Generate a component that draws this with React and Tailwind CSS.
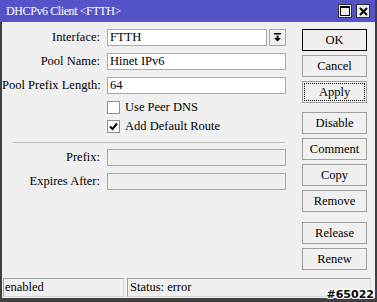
import React from 'react';

function Field({ label, value, disabled, dropdown }) {
  return (
    <div className="flex h-[17px] items-center">
      <div className="w-[98px] text-right leading-none whitespace-nowrap">{label}</div>
      <div className="ml-[7px] flex h-full w-[179px]">
        <div
          className={
            disabled
              ? 'h-full flex-1 border border-[#a8a8a8] bg-[#f0f0f0]'
              : 'flex h-full flex-1 items-center border border-[#a8a8a8] bg-white pl-[2px] leading-none'
          }
        >
          {value}
        </div>
        {dropdown && (
          <div className="ml-[2px] flex h-full w-[17px] items-center justify-center border border-[#a8a8a8] bg-[#f0f0f0]">
            <svg width="9" height="9" viewBox="0 0 9 9">
              <rect x="1" y="0" width="7" height="1.5" fill="#000" />
              <path d="M3.5 2.5h2v2.5h2.5L4.5 8.5 1 5h2.5z" fill="#000" />
            </svg>
          </div>
        )}
      </div>
    </div>
  );
}

function Check({ checked, label }) {
  return (
    <div className="ml-[105px] flex h-[13px] items-center">
      <div className="flex h-[13px] w-[13px] items-center justify-center border border-[#909090] bg-white">
        {checked && (
          <svg width="9" height="9" viewBox="0 0 9 9">
            <path d="M1 4.5l2.5 2.5L8 1.5" stroke="#000" strokeWidth="2" fill="none" />
          </svg>
        )}
      </div>
      <span className="ml-[5px] leading-none whitespace-nowrap">{label}</span>
    </div>
  );
}

function Btn({ children, main, focus, className = '' }) {
  return (
    <div
      className={
        'flex h-[22px] w-[65px] items-center justify-center border bg-[#f0f0f0] leading-none ' +
        (main ? 'border-black ' : 'border-[#a0a0a0] ') +
        (focus ? 'outline-1 outline-offset-[-3px] outline-dotted outline-black ' : '') +
        className
      }
    >
      {children}
    </div>
  );
}

export default function App() {
  return (
    <div className="relative flex h-[302px] w-[377px] flex-col bg-[#404040] pr-[2px] pb-[4px] font-['Liberation_Serif','DejaVu_Serif',Times,serif] text-[12.5px] text-black">
      <div className="flex h-[22px] shrink-0 items-center bg-[#5454c8] pl-[6px] pr-[5px] text-[12px] tracking-[-0.4px] text-white">
        <span className="leading-none">DHCPv6 Client &lt;FTTH&gt;</span>
        <div className="ml-auto flex gap-[4px]">
          <div className="flex h-[14px] w-[14px] items-center justify-center border border-[#303030] bg-[#ececec]">
            <svg width="10" height="10" viewBox="0 0 10 10">
              <rect x="0.5" y="0.5" width="9" height="9" fill="none" stroke="#000" />
              <rect x="0" y="0" width="10" height="2" fill="#000" />
            </svg>
          </div>
          <div className="flex h-[14px] w-[14px] items-center justify-center border border-[#303030] bg-[#ececec]">
            <svg width="9" height="9" viewBox="0 0 9 9">
              <path d="M1 1l7 7M8 1l-7 7" stroke="#000" strokeWidth="2" />
            </svg>
          </div>
        </div>
      </div>

      <div className="ml-[2px] flex flex-1 flex-col bg-[#f0f0f0] pb-[1px]">
        <div className="flex flex-1 pt-[7px]">
          <div className="flex w-[284px] flex-col">
            <div className="flex flex-col gap-[7px]">
              <Field label="Interface:" value="FTTH" dropdown />
              <Field label="Pool Name:" value="Hinet IPv6" />
              <Field label="Pool Prefix Length:" value="64" />
            </div>
            <div className="mt-[7px] flex flex-col gap-[6px]">
              <Check label="Use Peer DNS" />
              <Check checked label="Add Default Route" />
            </div>
            <div className="mt-[9px] ml-[11px] h-px w-[272px] bg-[#c0c0c0]" />
            <div className="mt-[6px] flex flex-col gap-[7px]">
              <Field label="Prefix:" disabled />
              <Field label="Expires After:" disabled />
            </div>
          </div>

          <div className="ml-[16px] flex flex-col">
            <Btn main>OK</Btn>
            <Btn className="mt-[4px]">Cancel</Btn>
            <Btn focus className="mt-[4px]">Apply</Btn>
            <Btn className="mt-[9px]">Disable</Btn>
            <Btn className="mt-[4px]">Comment</Btn>
            <Btn className="mt-[4px]">Copy</Btn>
            <Btn className="mt-[4px]">Remove</Btn>
            <Btn className="mt-[10px]">Release</Btn>
            <Btn className="mt-[4px]">Renew</Btn>
          </div>
        </div>

        <div className="flex gap-[3px] pl-[1px]">
          <div className="flex h-[19px] w-[121px] items-center border-t border-l border-t-[#a0a0a0] border-l-[#a0a0a0] border-r border-b border-r-[#d8d8d8] border-b-[#d8d8d8] pl-[1px] leading-none">
            enabled
          </div>
          <div className="flex h-[19px] w-[244px] items-center border-t border-l border-t-[#a0a0a0] border-l-[#a0a0a0] border-r border-b border-r-[#d8d8d8] border-b-[#d8d8d8] pl-[2px] leading-none">
            Status: error
          </div>
        </div>
      </div>

      <div className="absolute right-[3px] bottom-[2px] font-['DejaVu_Sans',sans-serif] text-[11px] font-bold leading-none text-black [text-shadow:1px_0_0_#fff,-1px_0_0_#fff,0_1px_0_#fff,0_-1px_0_#fff,1px_1px_0_#fff,-1px_-1px_0_#fff,1px_-1px_0_#fff,-1px_1px_0_#fff]">
        #65022
      </div>
    </div>
  );
}
